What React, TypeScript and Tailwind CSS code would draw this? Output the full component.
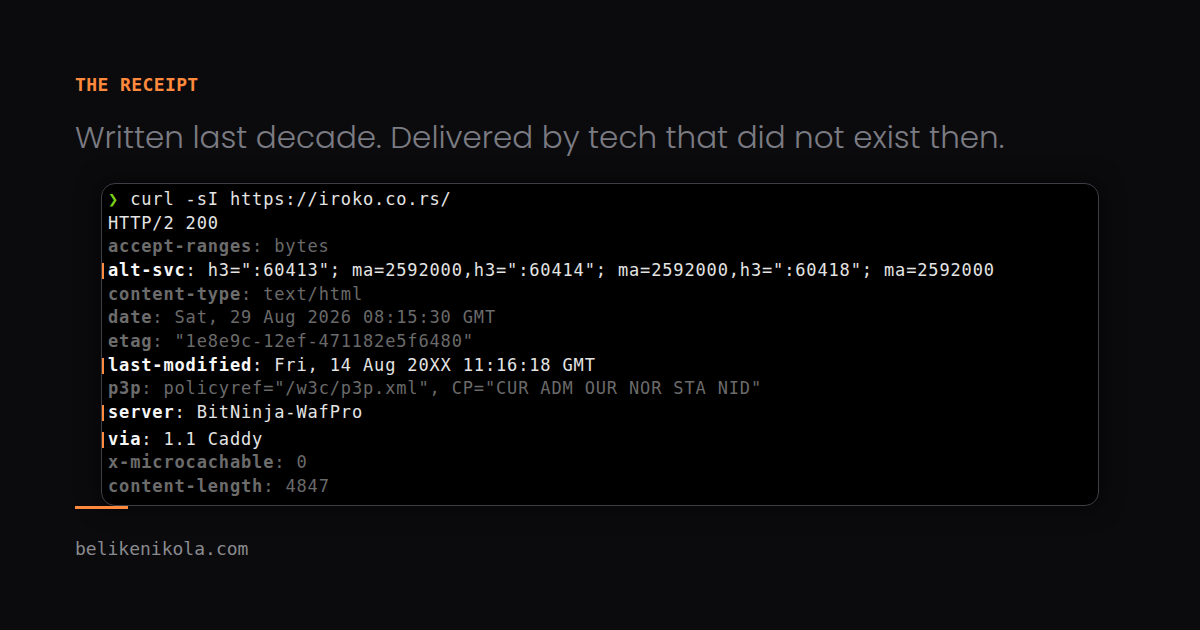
import React from "react";

type Line = { k: string; v: string; hl?: boolean; extra?: boolean };

const lines: Line[] = [
  { k: "accept-ranges", v: "bytes" },
  { k: "alt-svc", v: 'h3=":60413"; ma=2592000,h3=":60414"; ma=2592000,h3=":60418"; ma=2592000', hl: true },
  { k: "content-type", v: "text/html" },
  { k: "date", v: "Sat, 29 Aug 2026 08:15:30 GMT" },
  { k: "etag", v: '"1e8e9c-12ef-471182e5f6480"' },
  { k: "last-modified", v: "Fri, 14 Aug 20XX 11:16:18 GMT", hl: true },
  { k: "p3p", v: 'policyref="/w3c/p3p.xml", CP="CUR ADM OUR NOR STA NID"' },
  { k: "server", v: "BitNinja-WafPro", hl: true },
  { k: "via", v: "1.1 Caddy", hl: true, extra: true },
  { k: "x-microcachable", v: "0" },
  { k: "content-length", v: "4847" },
];

const mono = { fontFamily: '"DejaVu Sans Mono", "Liberation Mono", monospace' };

export default function App() {
  return (
    <div className="w-[1200px] h-[630px] bg-[#0b0b0d] pl-[75px] pt-[73px] overflow-hidden">
      <div
        className="text-[18px] leading-[24px] font-bold text-[#ff8a3d] tracking-[0.4px]"
        style={mono}
      >
        THE RECEIPT
      </div>
      <div
        className="mt-[20px] text-[31px] leading-[40px] font-light text-[#7b7b83] whitespace-nowrap"
        style={{ fontFamily: 'Poppins, Inter, "Noto Sans", sans-serif' }}
      >
        Written last decade. Delivered by tech that did not exist then.
      </div>
      <div
        className="ml-[26px] mt-[26px] w-[998px] h-[323px] bg-black border border-[#3e3e45] rounded-[14px] pt-[4px] text-[17px] leading-[23.67px] tracking-[0.85px] shadow-[0_0_24px_rgba(0,0,0,0.6)]"
        style={mono}
      >
        <div className="pl-[6px] text-[#e4e4e4]">
          <span className="text-[#7bd11a]">❯</span> curl -sI https://iroko.co.rs/
        </div>
        <div className="pl-[6px] text-[#e4e4e4]">HTTP/2 200</div>
        {lines.map((l) => (
          <div
            key={l.k}
            className={`relative pl-[6px] whitespace-pre ${l.extra ? "mt-[3px]" : ""}`}
          >
            {l.hl && (
              <span className="absolute left-0 top-[4px] w-[2px] h-[16px] bg-[#ff8a3d]" />
            )}
            <span className={l.hl ? "font-bold text-[#f7f7f7]" : "font-bold text-[#6c6c6c]"}>
              {l.k}
            </span>
            <span className={l.hl ? "text-[#e4e4e4]" : "text-[#6a6a6a]"}>: {l.v}</span>
          </div>
        ))}
      </div>
      <div className="w-[53px] h-[3px] bg-[#ff8a3d]" />
      <div className="mt-[28px] text-[18px] leading-[24px] text-[#8a8a8f]" style={mono}>
        belikenikola.com
      </div>
    </div>
  );
}
